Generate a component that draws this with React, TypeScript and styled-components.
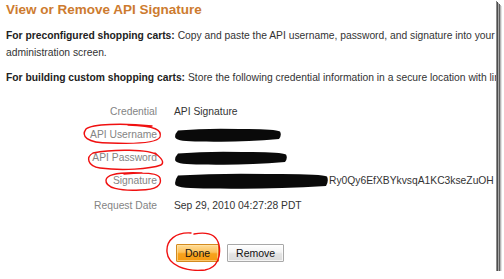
import React from 'react'
import styled, { createGlobalStyle } from 'styled-components'

const GlobalStyle = createGlobalStyle`
  html, body {
    margin: 0;
    padding: 0;
    background: #fff;
  }
  body {
    font-family: "Liberation Sans", Arial, sans-serif;
  }
`

const Frame = styled.div`
  position: relative;
  width: 496px;
  height: 271px;
  background: #fff;
  overflow: hidden;
  box-shadow: 1px 1px 0 #8c8c8c, 2px 2px 0 #4d4d4d, 3px 3px 0 #a6a6a6,
    4px 4px 0 #5e5e5e, 5px 5px 0 #b3b3b3, 6px 6px 0 #e2e2e2;
`

const Page = styled.div`
  display: flex;
  flex-direction: column;
  padding: 0 0 0 6px;
  color: #333;
`

const Title = styled.h1`
  margin: 0;
  font-size: 13.5px;
  line-height: 19px;
  font-weight: bold;
  color: #cd7b2f;
`

const Para = styled.p<{ $top: number }>`
  margin: ${(p) => p.$top}px 0 0;
  font-size: 10.3px;
  line-height: 17px;
  white-space: nowrap;
  color: #333;

  b {
    color: #222;
  }
`

const CredTable = styled.div`
  display: grid;
  grid-template-columns: 151px auto;
  column-gap: 17px;
  grid-auto-rows: 23px;
  align-items: center;
  margin-top: 14px;
  font-size: 10.3px;
`

const Label = styled.div<{ $shift?: number }>`
  text-align: right;
  color: #848484;
  margin-top: ${(p) => p.$shift ?? 0}px;
`

const Value = styled.div<{ $shift?: number }>`
  display: flex;
  align-items: center;
  color: #333;
  margin-top: ${(p) => p.$shift ?? 0}px;
`

const Buttons = styled.div`
  display: flex;
  gap: 8px;
  margin: 29px 0 0 170px;
`

const Button = styled.button<{ $primary?: boolean }>`
  height: 18px;
  padding: 0 8px;
  font-family: "Liberation Sans", Arial, sans-serif;
  font-size: 10.5px;
  color: #111;
  border-radius: 1px;
  border: 1px solid ${(p) => (p.$primary ? '#d38a1f' : '#a8a8a8')};
  background: ${(p) =>
    p.$primary
      ? 'linear-gradient(#ffdc98 0%, #fcc15a 45%, #f7a21c 55%, #f59a12 100%)'
      : 'linear-gradient(#ffffff 0%, #f3f3f3 45%, #e4e4e4 55%, #dcdcdc 100%)'};
  box-shadow: inset 0 0 0 1px ${(p) => (p.$primary ? 'rgba(255,230,170,0.6)' : 'rgba(255,255,255,0.7)')};
`

const Ink = styled.svg`
  position: absolute;
  inset: 0;
  pointer-events: none;
`

// brush-stroke redaction over a secret value
const Blot = ({ w, h = 14 }: { w: number; h?: number }) => (
  <svg width={w} height={h} viewBox={`0 0 ${w} ${h}`} style={{ display: 'block' }}>
    <path
      d={`M4 2.5 Q${w * 0.3} 0 ${w * 0.6} 1 Q${w - 8} 0.5 ${w - 2} 3.5 Q${w} ${h / 2} ${w - 3} ${h - 3}
         Q${w * 0.6} ${h + 0.5} ${w * 0.3} ${h - 0.5} Q4 ${h} 1.5 ${h - 4} Q0 ${h / 2} 4 2.5 Z`}
      fill="#0a0a0a"
    />
  </svg>
)

export default function App() {
  return (
    <>
      <GlobalStyle />
      <Frame>
        <Page>
          <Title>View or Remove API Signature</Title>
          <Para $top={8}>
            <b>For preconfigured shopping carts:</b> Copy and paste the API username, password, and
            signature into your shopping cart's
            <br />
            administration screen.
          </Para>
          <Para $top={8}>
            <b>For building custom shopping carts:</b> Store the following credential information in a
            secure location with limited access.
          </Para>
          <CredTable>
            <Label>Credential</Label>
            <Value>API Signature</Value>
            <Label>API Username</Label>
            <Value>
              <Blot w={108} h={14} />
            </Value>
            <Label>API Password</Label>
            <Value>
              <Blot w={114} h={14} />
            </Value>
            <Label>Signature</Label>
            <Value>
              <Blot w={155} h={16} />
              Ry0Qy6EfXBYkvsqA1KC3kseZuOH
            </Value>
            <Label $shift={3}>Request Date</Label>
            <Value $shift={3}>Sep 29, 2010 04:27:28 PDT</Value>
          </CredTable>
          <Buttons>
            <Button $primary>Done</Button>
            <Button>Remove</Button>
          </Buttons>
        </Page>
        <Ink width="496" height="271" viewBox="0 0 496 271">
          <g fill="none" stroke="#f01010" strokeWidth="1.4" strokeLinecap="round">
            <path d="M152 126 C122 123, 92 124, 86 129 C81 136, 86 143, 110 143 C135 144, 157 143, 160 137 C162 130, 156 126, 128 125" />
            <path d="M157 155 C150 149, 112 149, 93 153 C86 157, 87 166, 100 168 C122 171, 150 169, 161 165 C165 162, 161 158, 155 153" />
            <path d="M142 173 C120 172, 107 174, 106 180 C105 188, 120 191, 140 190 C157 190, 162 185, 160 178 C158 173, 146 172, 124 174" />
            <path d="M191 233 C176 232, 166 240, 167 252 C168 265, 185 272, 205 270 C218 268, 221 255, 219 245 C217 236, 210 231, 194 234" />
          </g>
        </Ink>
      </Frame>
    </>
  )
}
